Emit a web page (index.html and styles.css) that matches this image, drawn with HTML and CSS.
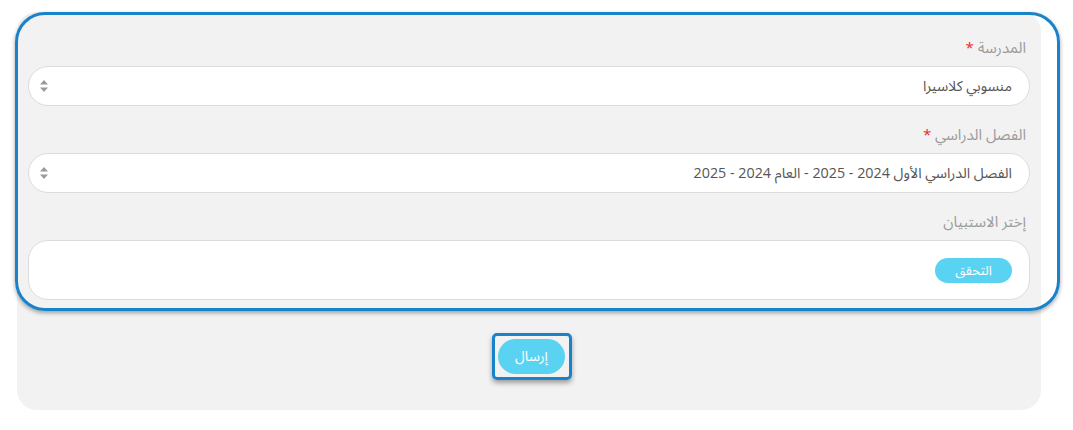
FILE: index.html
```html
<!DOCTYPE html>
<html lang="ar" dir="rtl">
    <head>
        <meta charset="utf-8">
        <title>الاستبيان</title>
        <link rel="stylesheet" href="styles.css">
    </head>
    <body>
        <div class="page">
            <form class="panel">
                <div class="highlight"></div>

                <!----- SCHOOL ----->
                <div class="field">
                    <label class="label">المدرسة <span class="req">*</span></label>
                    <div class="select">
                        <span class="value">منسوبي كلاسيرا</span>
                        <svg class="spin" width="10" height="14" viewBox="0 0 10 14"><path d="M5 1 L9 5.5 H1 Z" fill="#9a9a9a"/><path d="M5 13 L9 8.5 H1 Z" fill="#9a9a9a"/></svg>
                    </div>
                </div>

                <!----- TERM ----->
                <div class="field">
                    <label class="label">الفصل الدراسي <span class="req">*</span></label>
                    <div class="select">
                        <span class="value">الفصل الدراسي الأول 2024 - 2025 - العام 2024 - 2025</span>
                        <svg class="spin" width="10" height="14" viewBox="0 0 10 14"><path d="M5 1 L9 5.5 H1 Z" fill="#9a9a9a"/><path d="M5 13 L9 8.5 H1 Z" fill="#9a9a9a"/></svg>
                    </div>
                </div>

                <!----- SURVEY ----->
                <div class="field">
                    <label class="label">إختر الاستبيان</label>
                    <div class="box">
                        <span class="check">التحقق</span>
                    </div>
                </div>

                <div class="actions">
                    <div class="focus">
                        <button type="button" class="send">إرسال</button>
                    </div>
                </div>
            </form>
        </div>
    </body>
</html>
```

FILE: styles.css
```css
body{
    margin: 0;
    background: #ffffff;
    font-family: "Open Sans", "Noto Sans Arabic", "DejaVu Sans", sans-serif;
}
.page{
    padding: 12px 17px 0 17px;
    direction: ltr;
}
.panel{
    direction: rtl;
    position: relative;
    width: 1002px;
    padding: 25px 11px 30px 11px;
    background-color: #f2f2f2;
    border-radius: 20px;
}
/* blue focus frame drawn over the fields */
.highlight{
    position: absolute;
    top: 0;
    left: -2px;
    right: -19px;
    height: 293px;
    border: 3px solid #1a82c9;
    border-radius: 30px;
    box-shadow: 0 2px 4px rgba(0, 0, 0, 0.35);
    pointer-events: none;
}
.field{
    display: flex;
    flex-direction: column;
}
.field + .field{
    margin-top: 18px;
}
.label{
    height: 20px;
    line-height: 20px;
    padding-right: 4px;
    margin-bottom: 9px;
    font-size: 15px;
    color: #9b9b9b;
}
.req{
    color: #e8262b;
}
.select{
    height: 38px;
    display: flex;
    align-items: center;
    justify-content: space-between;
    padding: 0 17px 0 10px;
    background: #ffffff;
    border: 1px solid #dcdcdc;
    border-radius: 20px;
}
.value{
    font-size: 14.3px;
    color: #555555;
}
.spin{
    display: block;
}
.box{
    height: 58px;
    display: flex;
    align-items: center;
    padding: 0 17px;
    background: #ffffff;
    border: 1px solid #dcdcdc;
    border-radius: 20px;
}
.check{
    width: 77px;
    height: 25px;
    line-height: 25px;
    text-align: center;
    font-size: 13px;
    color: #ffffff;
    background-color: #5ad3f2;
    border-radius: 13px;
}
.actions{
    display: flex;
    justify-content: center;
    margin-top: 33px;
    padding-left: 6px;
}
.focus{
    padding: 3px 4px 3px 3px;
    border: 3px solid #1a82c9;
    border-radius: 5px;
    box-shadow: 0 3px 5px rgba(0, 0, 0, 0.35);
}
.send{
    display: block;
    width: 67px;
    height: 35px;
    border: none;
    border-radius: 18px;
    background-color: #5ad3f2;
    color: #ffffff;
    font-family: inherit;
    font-size: 14px;
}
```
